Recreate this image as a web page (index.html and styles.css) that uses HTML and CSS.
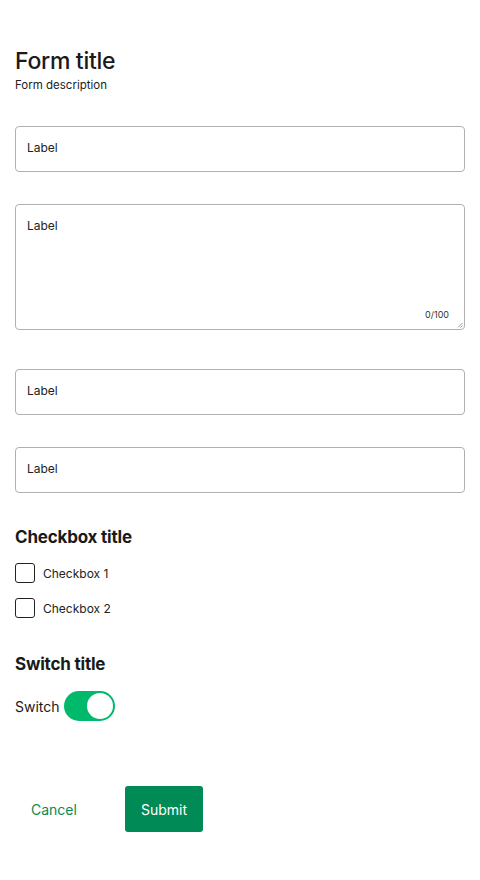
FILE: index.html
```html
<!DOCTYPE html>
<html>
<head>
<meta charset="utf-8">
<link rel="stylesheet" href="styles.css">
</head>
<body>
<form class="form">
  <header class="head">
    <h1 class="title">Form title</h1>
    <p class="desc">Form description</p>
  </header>
  <div class="field f1"><div class="input">Label</div></div>
  <div class="field">
    <div class="textarea">
      <span class="ta-label">Label</span>
      <span class="count">0/100</span>
      <svg class="grip" width="6" height="6" viewBox="0 0 6 6"><path d="M5.5 1 L1 5.5 M5.5 3.5 L3.5 5.5" stroke="#888" stroke-width="0.8" fill="none"/></svg>
    </div>
  </div>
  <div class="field f3"><div class="input">Label</div></div>
  <div class="field f4"><div class="input">Label</div></div>
  <section class="group">
    <h2 class="gtitle">Checkbox title</h2>
    <div class="checks">
      <label class="check"><span class="box"></span>Checkbox 1</label>
      <label class="check"><span class="box"></span>Checkbox 2</label>
    </div>
  </section>
  <section class="group sw-group">
    <h2 class="gtitle">Switch title</h2>
    <div class="switch-row"><span>Switch</span><span class="switch"><span class="knob"></span></span></div>
  </section>
  <div class="actions">
    <span class="cancel">Cancel</span>
    <span class="submit">Submit</span>
  </div>
</form>
</body>
</html>
```
FILE: styles.css
```css
* { box-sizing: border-box; }
body { margin: 0; background: #fff; font-family: "Inter", "Noto Sans", "Liberation Sans", sans-serif; color: #1a1a1a; }
.form { padding: 46px 15px 0 15px; display: flex; flex-direction: column; }
.head { margin-bottom: 33px; }
.title { margin: 0; font-size: 23px; font-weight: 500; line-height: 30px; letter-spacing: -0.3px; }
.desc { margin: 1px 0 0; font-size: 11.5px; line-height: 16px; color: #222; }
.field { margin-bottom: 33px; }
.field.f1 { margin-bottom: 32px; }
.input { height: 46px; border: 1px solid #b0b0b0; border-radius: 4px; padding: 0 11px 3px; display: flex; align-items: center; font-size: 12px; color: #222; }
.textarea { position: relative; height: 126px; border: 1px solid #b0b0b0; border-radius: 4px; padding: 13px 11px; font-size: 12px; color: #222; }
.count { position: absolute; right: 15px; bottom: 9px; font-size: 9px; color: #333; }
.grip { position: absolute; right: 1px; bottom: 1px; }
.field.f3 { margin-top: 6px; margin-bottom: 32px; }
.field.f4 { margin-bottom: 33px; }
.gtitle { margin: 0; font-size: 17px; font-weight: 700; line-height: 22px; letter-spacing: -0.2px; }
.checks { margin-top: 15px; display: flex; flex-direction: column; gap: 15px; }
.check { display: flex; align-items: center; gap: 8px; font-size: 12px; color: #222; height: 20px; }
.box { width: 20px; height: 20px; border: 1px solid #222; border-radius: 3px; }
.sw-group { margin-top: 35px; }
.switch-row { margin-top: 16px; display: flex; align-items: center; gap: 4px; font-size: 14px; }
.switch { width: 51px; height: 30px; border-radius: 15px; background: #00b96b; display: flex; justify-content: flex-end; padding: 2px; }
.knob { width: 26px; height: 26px; border-radius: 50%; background: #fff; }
.actions { margin-top: 65px; display: flex; align-items: center; gap: 32px; }
.cancel { color: #0b8a52; font-size: 14px; padding: 0 16px; height: 46px; display: flex; align-items: center; }
.submit { background: #008a56; color: #fff; font-size: 14px; height: 46px; padding: 0 16px; border-radius: 3px; display: flex; align-items: center; }
```
